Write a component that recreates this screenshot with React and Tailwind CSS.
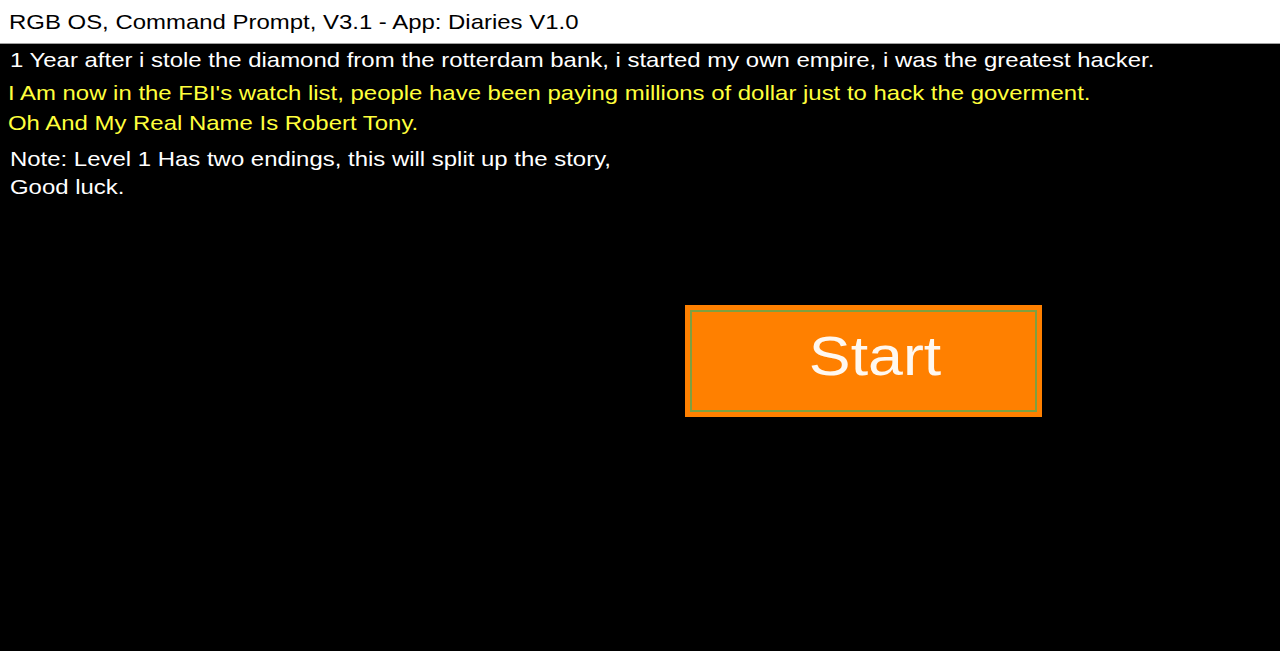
export default function App() {
  const line = "text-[21px] origin-left scale-x-[1.14] whitespace-nowrap";
  return (
    <div className="w-[1280px] h-[651px] bg-black flex flex-col overflow-hidden" style={{ fontFamily: '"Liberation Sans", Arial, sans-serif' }}>
      <div className="h-[44px] bg-white border-b border-[#a0a0a0] flex items-center px-[9px] shrink-0">
        <span className="text-[21px] text-black leading-none origin-left scale-x-[1.14] whitespace-nowrap">RGB OS, Command Prompt, V3.1 - App: Diaries V1.0</span>
      </div>
      <div className="flex flex-col pl-[10px] pt-[1px]">
        <p className={`text-white leading-[30px] ${line}`}>1 Year after i stole the diamond from the rotterdam bank, i started my own empire, i was the greatest hacker.</p>
        <p className={`text-[#ffff3c] leading-[30px] -ml-[2px] mt-[3px] ${line}`}>I Am now in the FBI's watch list, people have been paying millions of dollar just to hack the goverment.</p>
        <p className={`text-[#ffff3c] leading-[30px] -ml-[2px] ${line}`}>Oh And My Real Name Is Robert Tony.</p>
        <p className={`text-white leading-[28px] mt-[7px] ${line}`}>Note: Level 1 Has two endings, this will split up the story,</p>
        <p className={`text-white leading-[28px] ${line}`}>Good luck.</p>
      </div>
      <div className="flex pl-[685px] pt-[104px]">
        <div className="w-[357px] h-[112px] bg-[#ff8000] p-[5px]">
          <div className="w-full h-full border-2 border-[#7fa040] flex items-center justify-center pl-[24px] pb-[9px]">
            <span className="text-[#fff8f0] text-[55px] leading-none scale-x-[1.14]">Start</span>
          </div>
        </div>
      </div>
    </div>
  );
}
